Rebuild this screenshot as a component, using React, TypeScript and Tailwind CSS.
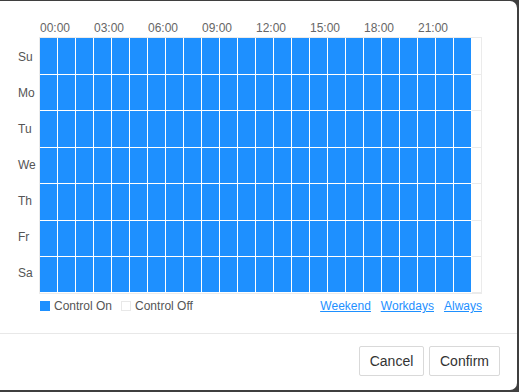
import React from "react"

const days = ["Su", "Mo", "Tu", "We", "Th", "Fr", "Sa"]
const hours = Array.from({ length: 24 }, (_, i) => i)
const labels = ["00:00", "03:00", "06:00", "09:00", "12:00", "15:00", "18:00", "21:00"]

export default function App() {
    return (
        <div className="h-[392px] w-[519px] bg-[#3f3f3f] pt-px pr-[2px] pb-[2px]" style={{ fontFamily: '"Liberation Sans", Arial, sans-serif' }}>
            <div className="flex h-full flex-col rounded-r-[7px] bg-white">
                <div className="h-[332px] pl-[18px] pt-4">
                    {/* time header */}
                    <div className="flex h-5 pl-[22px] pt-[3px]">
                        {labels.map((l) => (
                            <div key={l} className="w-[54px] text-[12px] leading-[17px] text-[#666]">{l}</div>
                        ))}
                    </div>

                    {/* grid */}
                    <div className="flex">
                        <div className="flex w-[21px] flex-col pt-[2px]">
                            {days.map((d) => (
                                <div key={d} className="flex h-9 items-center text-[12px] text-[#555]">{d}</div>
                            ))}
                        </div>
                        <div className="w-[443px] border border-[#ebebeb]">
                            {days.map((d, i) => (
                                <div key={d} className={`flex ${i % 2 === 0 && i < 6 ? "h-[37px]" : "h-9"}`}>
                                    {hours.map((h) => (
                                        <div key={h} className="h-full w-[18px] border-r border-b border-white bg-[#1e90ff]" />
                                    ))}
                                    <div className="h-full flex-1 border-b border-[#ebebeb]" />
                                </div>
                            ))}
                        </div>
                    </div>

                    {/* legend */}
                    <div className="mt-[4px] flex h-4 w-[464px] items-center pl-[22px] text-[12px] text-[#555]">
                        <span className="mr-1 h-[10px] w-[10px] bg-[#1e90ff]" />
                        <span>Control On</span>
                        <span className="ml-[9px] mr-1 h-[10px] w-[10px] border border-[#e8e8e8] bg-white" />
                        <span>Control Off</span>
                        <div className="ml-auto flex gap-[10px] text-[#1e90ff] underline">
                            <a>Weekend</a>
                            <a>Workdays</a>
                            <a>Always</a>
                        </div>
                    </div>
                </div>

                {/* footer */}
                <div className="flex flex-1 items-start justify-end gap-[5px] border-t border-[#e8e8e8] pt-[12px] pr-[17px]">
                    <button className="h-[30px] w-[65px] rounded-[2px] border border-[#d9d9d9] bg-white text-[14px] text-[#333]">Cancel</button>
                    <button className="h-[30px] w-[71px] rounded-[2px] border border-[#d9d9d9] bg-white text-[14px] text-[#333]">Confirm</button>
                </div>
            </div>
        </div>
    )
}
